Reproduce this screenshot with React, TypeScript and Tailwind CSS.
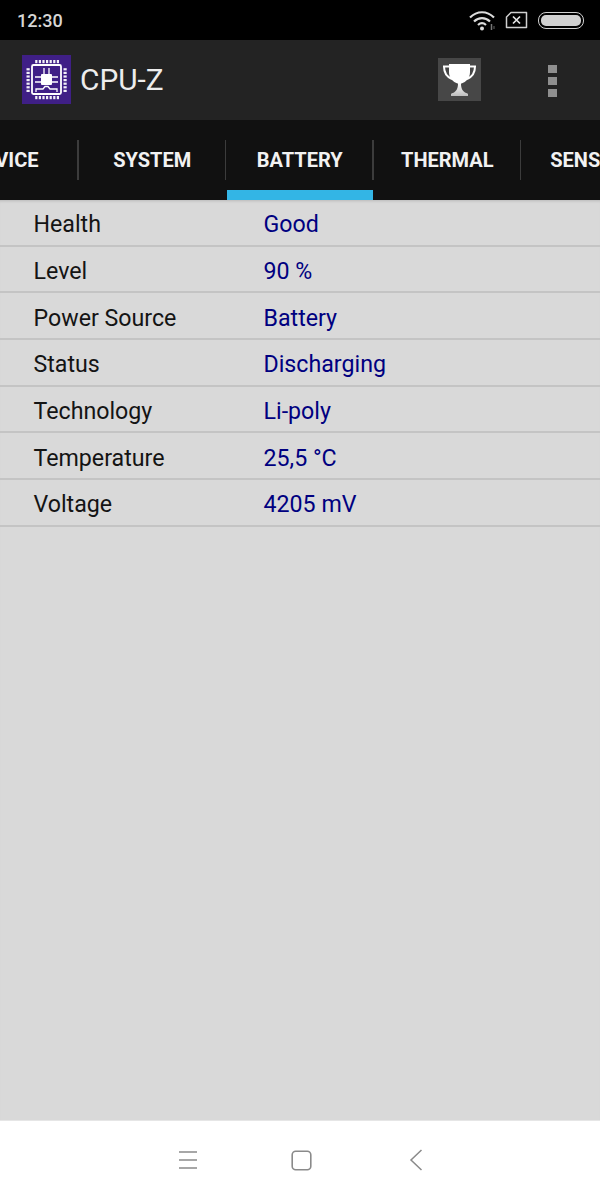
import React from "react";

const rows: [string, string][] = [
  ["Health", "Good"],
  ["Level", "90 %"],
  ["Power Source", "Battery"],
  ["Status", "Discharging"],
  ["Technology", "Li-poly"],
  ["Temperature", "25,5 °C"],
  ["Voltage", "4205 mV"],
];

const tabs = ["DEVICE", "SYSTEM", "BATTERY", "THERMAL", "SENSORS"];

function CpuLogo() {
  const pins = [0, 1, 2, 3, 4, 5, 6];
  return (
    <svg width="49" height="49" viewBox="0 0 49 49" className="shrink-0">
      <rect width="49" height="49" fill="#3f1f86" />
      <rect x="10" y="10" width="29" height="29" rx="1.500" fill="none" stroke="#fff" strokeWidth="1.800" />
      {pins.map((i) => (
        <g key={i} fill="#f2f0f8">
          <rect x={13.2 + i * 3.6} y="5" width="2.200" height="3.200" />
          <rect x={13.2 + i * 3.6} y="41" width="2.200" height="3.200" />
          <rect x="4.500" y={13.2 + i * 3.6} width="3.200" height="2.200" />
          <rect x="41.500" y={13.2 + i * 3.6} width="3.200" height="2.200" />
        </g>
      ))}
      <rect x="19" y="19" width="11" height="11" rx="1" fill="#fff" />
      <path
        d="M22 19v-6M27 19v-6M19 22h-6M19 27h-6M30 22h6M30 27h6M14 37v-3h7l2-2.500h3l2 2.500h7v3"
        fill="none"
        stroke="#fff"
        strokeWidth="1.300"
      />
    </svg>
  );
}

function Trophy() {
  return (
    <div className="flex h-[43px] w-[43px] items-center justify-center bg-[#474747]">
      <svg width="33" height="33" viewBox="0 0 33 33">
        <defs>
          <linearGradient id="stem" x1="0" y1="0" x2="0" y2="1">
            <stop offset="0" stopColor="#ffffff" />
            <stop offset="1" stopColor="#bdbdbd" />
          </linearGradient>
        </defs>
        <path d="M6 1h21v8c0 6-4 10-8.500 11.500h-4C10 19 6 15 6 9z" fill="#fff" />
        <path d="M15 20h3c0 4 .5 7 4 9.500 1.500.8 3 1 3 1.500v2H8v-2c0-.5 1.500-.7 3-1.500 3.500-2.500 4-5.500 4-9.500z" fill="url(#stem)" />
        <path d="M6 3.500H1c0 6 3 10.500 8 12.500M27 3.500h5c0 6-3 10.500-8 12.500" fill="none" stroke="#fff" strokeWidth="2" />
      </svg>
    </div>
  );
}

function StatusIcons() {
  return (
    <div className="flex items-center">
      <svg width="28" height="22" viewBox="0 0 28 22">
        <path d="M2 8.500C9 1.500 19 1.500 26 8.500" fill="none" stroke="#dcdcdc" strokeWidth="2.200" />
        <path d="M6 12.500c4.700-4.500 11.300-4.500 16 0" fill="none" stroke="#dcdcdc" strokeWidth="2.200" />
        <path d="M10 16c2.400-2.200 5.600-2.200 8 0" fill="none" stroke="#dcdcdc" strokeWidth="2.200" />
        <circle cx="14" cy="19.500" r="2" fill="#dcdcdc" />
        <path d="M23.500 15v6" stroke="#777" strokeWidth="1.500" />
        <path d="M26 17v3" stroke="#555" strokeWidth="1.200" />
      </svg>
      <svg width="23" height="18" viewBox="0 0 23 18" className="ml-[9px]">
        <path d="M6 1.500h15.500v15H1.500V6z" fill="none" stroke="#cfcfcf" strokeWidth="1.500" strokeLinejoin="round" />
        <path d="M8 5.500l7 7M15 5.500l-7 7" stroke="#e5e5e5" strokeWidth="1.700" />
      </svg>
      <div className="ml-[10px] flex h-[17px] w-[46px] items-center justify-center rounded-[8px] border-[1.5px] border-[#d0d0d0]">
        <div className="h-[11px] w-[40px] rounded-[5px] bg-[#d0d0d0]" />
      </div>
    </div>
  );
}

export default function App() {
  return (
    <div
      className="flex h-[1200px] w-[600px] flex-col overflow-hidden bg-[#d9d9d9]"
      style={{ fontFamily: "Roboto, sans-serif" }}
    >
      <div className="flex h-10 shrink-0 items-center justify-between bg-black pl-[17px] pr-[16px]">
        <span className="text-[18px] font-medium text-[#d6d6d6]">12:30</span>
        <StatusIcons />
      </div>

      <div className="flex h-20 shrink-0 items-center bg-[#232323] pl-[22px] pb-[1px]">
        <CpuLogo />
        <span className="ml-[9px] w-[82px] whitespace-nowrap text-[29.8px] leading-none text-[#ededed]">CPU-Z</span>
        <div className="ml-[276px]">
          <Trophy />
        </div>
        <div className="ml-[67px] mt-[3px] flex flex-col gap-[3.500px]">
          <div className="h-[8.500px] w-[9px] bg-[#8f8f8f]" />
          <div className="h-[8.500px] w-[9px] bg-[#8f8f8f]" />
          <div className="h-[8.500px] w-[9px] bg-[#8f8f8f]" />
        </div>
      </div>

      <div className="flex h-20 shrink-0 overflow-hidden bg-[#111111]">
        <div className="-ml-[69px] flex">
          {tabs.map((t) => (
            <div key={t} className="relative flex h-20 w-[147.5px] shrink-0 items-center justify-center">
              <span className="text-[20px] font-bold leading-none text-[#f2f2f2]">{t}</span>
              <div className="absolute right-0 top-5 h-10 w-[1.5px] bg-[#3c3c3c]" />
              {t === "BATTERY" && (
                <div className="absolute bottom-0 left-[1px] right-[0.5px] h-[10px] bg-[#33b5e5]" />
              )}
            </div>
          ))}
        </div>
      </div>

      <div className="flex flex-1 flex-col shadow-[inset_0_3px_3px_-2px_rgba(0,0,0,0.15)]">
        {rows.map(([k, v]) => (
          <div
            key={k}
            className="flex h-[46.67px] shrink-0 items-center border-b-2 border-[#c4c4c4] pl-[33.500px] pt-[5px] text-[23.2px] leading-none"
          >
            <span className="w-[230px] text-[#141414]">{k}</span>
            <span className="text-[#000080]">{v}</span>
          </div>
        ))}
      </div>

      <div className="flex h-20 shrink-0 items-center border-t border-[#e6e6e6] bg-white pb-[1px] pl-[177.500px]">
        <svg width="20" height="20" viewBox="0 0 20 20">
          <path d="M1 2h18M1 10h18M1 18h18" stroke="#8a8a8a" strokeWidth="1.500" />
        </svg>
        <svg width="21" height="21" viewBox="0 0 21 21" className="ml-[93px]">
          <rect x="1.200" y="1.200" width="18.600" height="18.600" rx="3.500" fill="none" stroke="#8a8a8a" strokeWidth="1.600" />
        </svg>
        <svg width="14" height="22" viewBox="0 0 14 22" className="ml-[97px]">
          <path d="M12.500 1L2 11l10.500 10" fill="none" stroke="#8a8a8a" strokeWidth="1.500" />
        </svg>
      </div>
    </div>
  );
}
